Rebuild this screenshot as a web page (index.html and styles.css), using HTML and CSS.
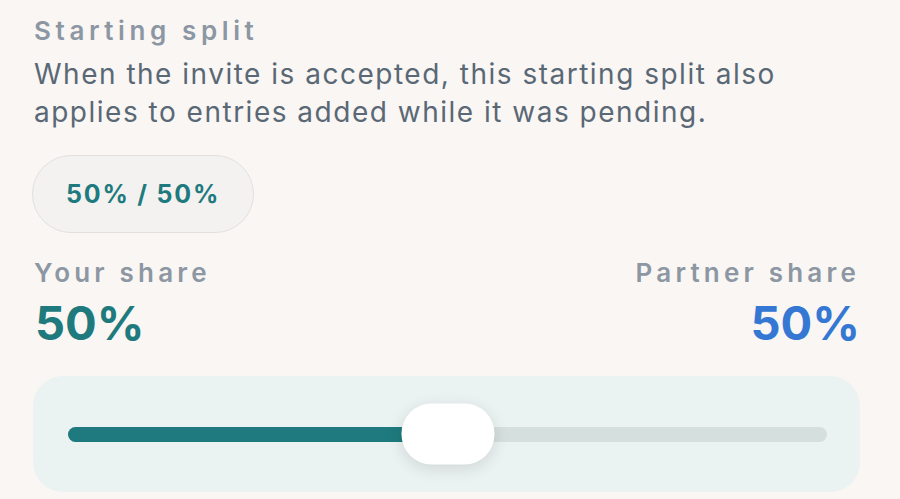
FILE: index.html
```html
<!DOCTYPE html>
<html lang="en">
<head>
 <meta charset="UTF-8">
 <meta name="viewport" content="width=device-width, initial-scale=1.0">
 <title>Starting split</title>
 <link rel="stylesheet" href="styles.css">
</head>
<body>
 <div class="split-section">
  <h2 class="section-label">Starting split</h2>
  <p class="section-note">When the invite is accepted, this starting split also applies to entries added while it was pending.</p>

  <div class="preset-row">
   <button class="preset-pill">50% / 50%</button>
  </div>

  <div class="share-row">
   <div class="share share-you">
    <div class="share-label">Your share</div>
    <div class="share-value">50%</div>
   </div>
   <div class="share share-partner">
    <div class="share-label">Partner share</div>
    <div class="share-value">50%</div>
   </div>
  </div>

  <div class="slider-card">
   <div class="slider-track">
    <div class="slider-fill" style="width: 50%"></div>
    <div class="slider-thumb" style="left: 50%"></div>
   </div>
  </div>
 </div>
</body>
</html>
```

FILE: styles.css
```css
body {
 margin: 0;
 background-color: #f9f6f3;
 font-family: Inter, "Noto Sans", sans-serif;
 color: #5b6b79;
}

.split-section {
 padding: 14px 40px 0 34px;
}

.section-label {
 margin: 0;
 font-size: 26px;
 line-height: 34px;
 font-weight: 600;
 letter-spacing: 4.6px;
 color: #8c97a3;
}

.section-note {
 margin: 7px 0 0;
 max-width: 780px;
 font-size: 28px;
 line-height: 38px;
 letter-spacing: 1.5px;
 color: #5a6876;
}

.preset-row {
 margin-top: 24px;
}

.preset-pill {
 height: 78px;
 padding: 0 33px;
 margin-left: -2px;
 border: 1.5px solid #e2e1df;
 border-radius: 39px;
 background-color: #f3f2f0;
 font-family: inherit;
 font-size: 25px;
 font-weight: 700;
 color: #1f7a7e;
 letter-spacing: 1.8px;
}

.share-row {
 display: flex;
 justify-content: space-between;
 margin-top: 23px;
}

.share-partner {
 text-align: right;
}

.share-label {
 font-size: 26px;
 line-height: 34px;
 font-weight: 600;
 letter-spacing: 4.2px;
 color: #8c97a3;
}

.share-value {
 margin-top: 4px;
 font-size: 47px;
 line-height: 58px;
 font-weight: 700;
}

.share-you .share-value {
 margin-left: 1px;
 color: #1f7a7e;
}

.share-partner .share-value {
 color: #3478d4;
}

.slider-card {
 margin-top: 24px;
 margin-left: -1px;
 height: 116px;
 padding: 0 33px 0 35px;
 border-radius: 30px;
 background-color: #ebf3f2;
 display: flex;
 align-items: center;
}

.slider-track {
 position: relative;
 flex-grow: 1;
 height: 15px;
 border-radius: 8px;
 background-color: #d5dfde;
}

.slider-fill {
 height: 100%;
 border-radius: 8px;
 background-color: #1e7a7e;
}

.slider-thumb {
 position: absolute;
 top: 50%;
 width: 93px;
 height: 61px;
 border-radius: 30px;
 background-color: #fff;
 transform: translate(-50%, -50%);
 box-shadow: 0 4px 16px rgba(0, 0, 0, 0.12);
}
```
